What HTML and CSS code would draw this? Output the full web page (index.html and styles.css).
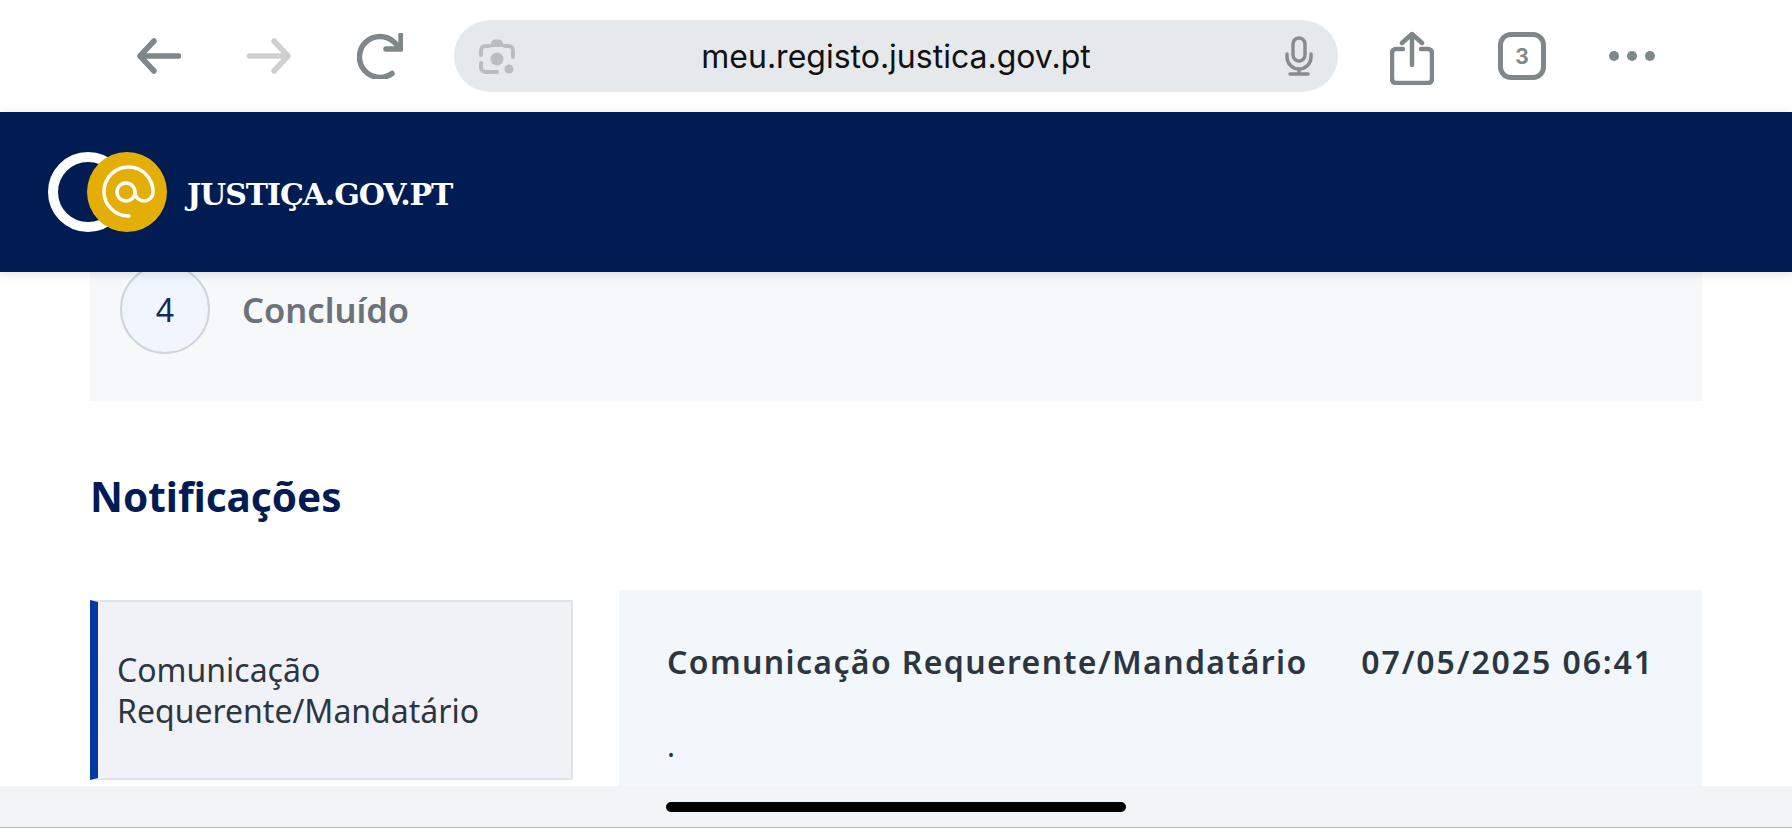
FILE: index.html
```html
<!DOCTYPE html>
<html lang="pt">
<head>
  <meta charset="UTF-8" />
  <meta name="viewport" content="width=device-width, initial-scale=1.0">
  <title>Notificações</title>
  <link rel="stylesheet" href="styles.css">
</head>
<body>
  <div class="browser-bar">
    <div class="nav-icons">
      <svg width="44" height="36" viewBox="0 0 44 36" class="icon-gray"><path d="M41.500 18H3M17 3 3 18l14 15"/></svg>
      <svg width="44" height="36" viewBox="0 0 44 36" class="icon-light"><path d="M2.500 18H41M27 3l14 15-14 15"/></svg>
      <svg width="46" height="46" viewBox="0 0 46 46" class="icon-gray"><path d="M35 40.500A20.500 20.500 0 1 1 37 9l6 6"/><path d="M44 2v14H29"/></svg>
    </div>
    <div class="url-bar">
      <svg class="lens" width="36" height="36" viewBox="0 0 36 36"><path d="M10 8H6.500A4.500 4.500 0 0 0 2 12.500V17M26 8h3.500A4.500 4.500 0 0 1 34 12.500V19M2 25v4.500A4.500 4.500 0 0 0 6.500 34H18"/><path class="lens-top" d="M10 9L13 3Q13.500 1.500 15 1.500h6q1.500 0 2 1.500L26 9z"/><circle class="lens-fill" cx="18" cy="21" r="6.500"/><circle class="lens-fill" cx="30" cy="31" r="4.500"/></svg>
      <span class="url-text">meu.registo.justica.gov.pt</span>
      <svg class="mic" width="28" height="40" viewBox="0 0 28 40"><rect x="8" y="2" width="12" height="23" rx="6"/><path d="M2 18v3a12 12 0 0 0 24 0v-3M14 33v5M5 38h18"/></svg>
    </div>
    <div class="action-icons">
      <svg width="44" height="54" viewBox="0 0 44 54" class="icon-gray share"><path d="M13 18H6a4 4 0 0 0-4 4v26a4 4 0 0 0 4 4h32a4 4 0 0 0 4-4V22a4 4 0 0 0-4-4h-7"/><path d="M22 34V3M12 12l10-9 10 9"/></svg>
      <div class="tabs-count">3</div>
      <svg width="46" height="10" viewBox="0 0 46 10"><circle cx="5" cy="5" r="5" fill="#80878a"/><circle cx="23" cy="5" r="5" fill="#80878a"/><circle cx="41" cy="5" r="5" fill="#80878a"/></svg>
    </div>
  </div>

  <header class="site-header">
    <svg width="120" height="80" viewBox="0 0 120 80">
      <circle cx="40" cy="40" r="35" fill="none" stroke="#fff" stroke-width="10"/>
      <circle cx="79" cy="40" r="40" fill="#e3af06"/>
      <g fill="none" stroke="#fff" stroke-width="3.500" stroke-linecap="round">
        <circle cx="78" cy="40" r="9"/>
        <path d="M81 64A24.500 24.500 0 1 1 105 40C105 45 101 49 96 49C91 49 87 45 87 40"/>
      </g>
    </svg>
    <span class="site-name">JUSTIÇA.GOV.PT</span>
  </header>

  <main class="content">
    <section class="steps">
      <div class="step">
        <div class="step-number">4</div>
        <span class="step-label">Concluído</span>
      </div>
    </section>

    <h1>Notificações</h1>

    <div class="notifications">
      <div class="notification-item">Comunicação Requerente/Mandatário</div>
      <div class="notification-panel">
        <div class="notification-head">
          <span class="notification-title">Comunicação Requerente/Mandatário</span>
          <span class="notification-date">07/05/2025 06:41</span>
        </div>
        <p>.</p>
      </div>
    </div>
  </main>

  <div class="home-bar"><div class="home-indicator"></div></div>
</body>
</html>
```

FILE: styles.css
```css
* {
  box-sizing: border-box;
}
body {
  margin: 0;
  height: 828px;
  overflow: hidden;
  position: relative;
  background: #fff;
  font-family: 'Noto Sans', sans-serif;
  color: #2c3640;
}
svg {
  display: block;
  flex: none;
}
.browser-bar {
  height: 112px;
  padding-left: 137px;
  display: flex;
  align-items: center;
  background: #fff;
}
.nav-icons {
  display: flex;
  align-items: center;
  gap: 66px;
  width: 317px;
}
.nav-icons svg, .action-icons svg {
  fill: none;
  stroke-width: 5.500;
  stroke-linecap: round;
  stroke-linejoin: round;
}
.icon-gray {
  stroke: #80878a;
}
.icon-light {
  stroke: #cfcfcf;
}
.action-icons .share {
  stroke-width: 4.500;
  margin-top: 3px;
}
.url-bar {
  width: 884px;
  height: 72px;
  border-radius: 36px;
  background: #e6e9ec;
  padding: 0 25px;
  display: flex;
  align-items: center;
  justify-content: space-between;
}
.url-text {
  margin-right: 8px;
  font-family: 'Inter', sans-serif;
  font-size: 32px;
  color: #111;
}
.lens {
  fill: none;
  stroke: #b9bdc0;
  stroke-width: 4;
  stroke-linecap: round;
}
.lens-top, .lens-fill {
  fill: #b9bdc0;
  stroke: none;
}
.mic {
  fill: none;
  stroke: #868d90;
  stroke-width: 3.500;
  stroke-linecap: round;
}
.action-icons {
  display: flex;
  align-items: center;
  margin-left: 52px;
}
.action-icons svg:last-child {
  margin-left: 63px;
}
.tabs-count {
  width: 48px;
  height: 48px;
  margin-left: 64px;
  border: 5px solid #80878a;
  border-radius: 13px;
  color: #80878a;
  font-family: 'Inter', sans-serif;
  font-size: 21px;
  font-weight: 700;
  display: flex;
  align-items: center;
  justify-content: center;
}
.site-header {
  position: relative;
  z-index: 2;
  height: 160px;
  padding: 40px 0 0 48px;
  background: #011c53;
  box-shadow: 0 2px 10px rgba(0, 0, 0, 0.12);
  display: flex;
  align-items: flex-start;
  gap: 19px;
}
.site-name {
  margin-top: 25px;
  font-family: 'DejaVu Serif', serif;
  font-size: 30px;
  font-weight: 700;
  letter-spacing: -1.100px;
  line-height: 36px;
  color: #fff;
}
.content {
  padding: 0 90px;
}
.steps {
  height: 137px;
  padding-left: 30px;
  background: #f7f8fa;
}
.step {
  display: flex;
  align-items: center;
  gap: 32px;
  margin-top: -8px;
  position: relative;
}
.step-number {
  width: 90px;
  height: 90px;
  border: 2px solid #cfd5db;
  border-radius: 50%;
  background: #f0f5fe;
  color: #14295e;
  font-size: 32px;
  display: flex;
  align-items: center;
  justify-content: center;
}
.step-label {
  font-size: 34.500px;
  font-weight: 600;
  color: #6c727a;
}
h1 {
  margin: 69px 0 0;
  height: 54px;
  font-size: 40.500px;
  line-height: 54px;
  font-weight: 700;
  color: #011c53;
}
.notifications {
  margin-top: 66px;
  display: flex;
  align-items: flex-start;
  gap: 46px;
}
.notification-item {
  width: 483px;
  height: 180px;
  margin-top: 10px;
  padding: 0 40px 0 19px;
  border: 2px solid #e0e3ea;
  border-left: 8px solid #0438a3;
  background: #f0f2f7;
  font-size: 32px;
  line-height: 41px;
  display: flex;
  align-items: center;
}
.notification-panel {
  flex: 1;
  height: 260px;
  padding: 51px 48px 0 48px;
  background: #f2f7fb;
}
.notification-head {
  display: flex;
  justify-content: space-between;
  font-size: 32px;
  line-height: 42px;
  font-weight: 600;
}
.notification-title {
  letter-spacing: 1.360px;
}
.notification-date {
  letter-spacing: 1.900px;
}
.notification-panel p {
  margin: 42px 0 0;
  font-size: 30px;
  line-height: 42px;
}
.home-bar {
  position: absolute;
  left: 0;
  right: 0;
  bottom: 0;
  height: 42px;
  padding-top: 16px;
  background: #f1f5f8;
  border-bottom: 1px solid #b9bcbf;
  display: flex;
  justify-content: center;
}
.home-indicator {
  width: 460px;
  height: 10px;
  border-radius: 5px;
  background: #000;
}
```
